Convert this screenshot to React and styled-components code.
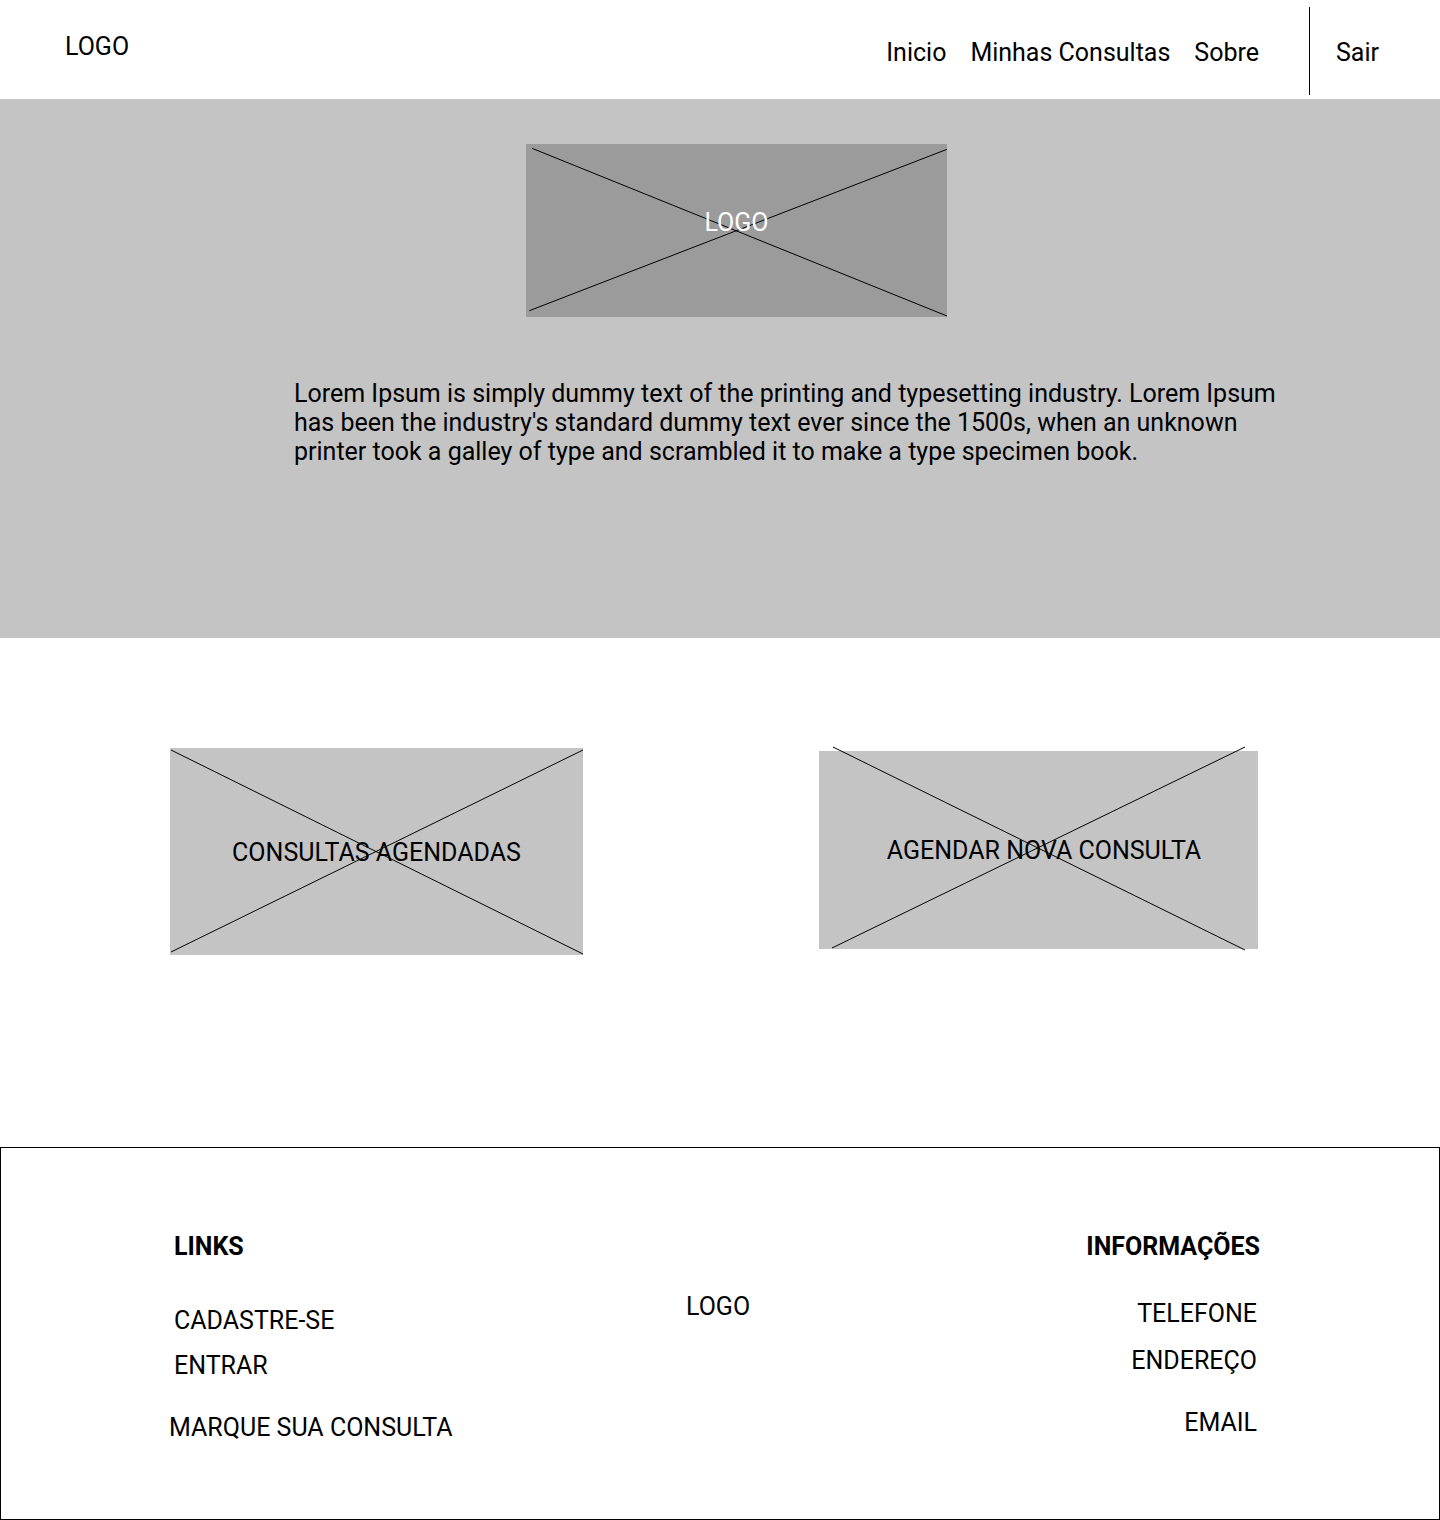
import React from "react";
import styled, { createGlobalStyle } from "styled-components";

const GlobalStyle = createGlobalStyle`
  html, body {
    margin: 0;
    padding: 0;
    background: #ffffff;
  }
  body {
    font-family: Roboto, "Liberation Sans", Arial, sans-serif;
    font-size: 25px;
    line-height: 28px;
    color: #000000;
  }
  * { box-sizing: border-box; }
`;

const Page = styled.div`
  width: 1440px;
  display: flex;
  flex-direction: column;
`;

/* ---------- Header ---------- */
const Header = styled.header`
  height: 99px;
  display: flex;
  align-items: flex-start;
  background: #ffffff;
`;

const Brand = styled.div`
  margin: 33px 0 0 65px;
`;

const Nav = styled.nav`
  margin: 39px 0 0 auto;
  display: flex;
  gap: 24px;
`;

const NavLink = styled.span`
  white-space: nowrap;
`;

const Divider = styled.div`
  width: 1px;
  height: 88px;
  margin: 7px 0 0 50px;
  background: #000000;
`;

const Logout = styled.span`
  margin: 39px 61px 0 26px;
`;

/* ---------- Hero ---------- */
const Hero = styled.section`
  height: 539px;
  background: #c4c4c4;
  padding-top: 45px;
  display: flex;
  flex-direction: column;
`;

const Placeholder = styled.div`
  position: relative;
  width: ${(p) => p.$w}px;
  height: ${(p) => p.$h}px;
  background: ${(p) => p.$bg || "#c4c4c4"};
  flex: none;
`;

const Cross = styled.svg`
  position: absolute;
  left: 0;
  top: 0;
  overflow: visible;
  pointer-events: none;
`;

const HeroLogo = styled(Placeholder)`
  margin-left: 526px;
  display: flex;
  justify-content: center;
  align-items: flex-start;
`;

const HeroLogoLabel = styled.span`
  position: relative;
  margin-top: 65px;
  color: #ffffff;
`;

const Intro = styled.p`
  margin: 62px 0 0 294px;
  width: 1000px;
  line-height: 29px;
`;

/* ---------- Cards ---------- */
const Actions = styled.section`
  height: 509px;
  display: flex;
  align-items: flex-start;
  padding: 110px 0 0 170px;
`;

const ActionCard = styled(Placeholder)`
  display: flex;
  align-items: center;
  justify-content: center;
  margin-top: ${(p) => p.$top || 0}px;
  margin-left: ${(p) => p.$left || 0}px;
  padding-left: ${(p) => p.$shift || 0}px;
  padding-top: 2px;
`;

const CardLabel = styled.span`
  position: relative;
  white-space: nowrap;
`;

/* ---------- Footer ---------- */
const Footer = styled.footer`
  height: 373px;
  border: 1px solid #000000;
  display: grid;
  grid-template-columns: 512px 1fr auto;
  align-items: start;
  padding: 85px 179px 0 173px;
`;

const Column = styled.div`
  display: flex;
  flex-direction: column;
  align-items: ${(p) => (p.$right ? "flex-end" : "flex-start")};
  text-align: ${(p) => (p.$right ? "right" : "left")};
`;

const ColumnTitle = styled.div`
  font-weight: 700;
`;

const FooterItem = styled.div`
  margin-top: ${(p) => p.$gap}px;
  margin-left: ${(p) => p.$x || 0}px;
  margin-right: ${(p) => p.$r || 0}px;
  white-space: nowrap;
`;

const FooterLogo = styled.div`
  margin-top: 60px;
`;

function XLines({ w, h, lines }) {
  return (
    <Cross width={w} height={h} viewBox={`0 0 ${w} ${h}`}>
      {lines.map((l, i) => (
        <line key={i} x1={l[0]} y1={l[1]} x2={l[2]} y2={l[3]} stroke="#000" strokeWidth="1" />
      ))}
    </Cross>
  );
}

export default function App() {
  return (
    <>
      <GlobalStyle />
      <Page>
        <Header>
          <Brand>LOGO</Brand>
          <Nav>
            <NavLink>Inicio</NavLink>
            <NavLink>Minhas Consultas</NavLink>
            <NavLink>Sobre</NavLink>
          </Nav>
          <Divider />
          <Logout>Sair</Logout>
        </Header>

        <Hero>
          <HeroLogo $w={421} $h={173} $bg="#9b9b9b">
            <XLines
              w={421}
              h={173}
              lines={[
                [6, 4.3, 421, 172],
                [3.3, 166.7, 421, 5.3],
              ]}
            />
            <HeroLogoLabel>LOGO</HeroLogoLabel>
          </HeroLogo>
          <Intro>
            Lorem Ipsum is simply dummy text of the printing and typesetting industry. Lorem Ipsum
            has been the industry's standard dummy text ever since the 1500s, when an unknown
            printer took a galley of type and scrambled it to make a type specimen book.
          </Intro>
        </Hero>

        <Actions>
          <ActionCard $w={413} $h={207}>
            <XLines
              w={413}
              h={207}
              lines={[
                [1, 2, 413, 206],
                [1, 204, 413, 2],
              ]}
            />
            <CardLabel>CONSULTAS AGENDADAS</CardLabel>
          </ActionCard>
          <ActionCard $w={439} $h={198} $top={3} $left={236} $shift={11}>
            <XLines
              w={439}
              h={198}
              lines={[
                [14, -4, 426, 199],
                [13, 197, 426, -4],
              ]}
            />
            <CardLabel>AGENDAR NOVA CONSULTA</CardLabel>
          </ActionCard>
        </Actions>

        <Footer>
          <Column>
            <ColumnTitle>LINKS</ColumnTitle>
            <FooterItem $gap={46}>CADASTRE-SE</FooterItem>
            <FooterItem $gap={17}>ENTRAR</FooterItem>
            <FooterItem $gap={34} $x={-5}>MARQUE SUA CONSULTA</FooterItem>
          </Column>
          <FooterLogo>LOGO</FooterLogo>
          <Column $right>
            <ColumnTitle>INFORMAÇÕES</ColumnTitle>
            <FooterItem $gap={39} $r={3}>TELEFONE</FooterItem>
            <FooterItem $gap={19} $r={3}>ENDEREÇO</FooterItem>
            <FooterItem $gap={34} $r={3}>EMAIL</FooterItem>
          </Column>
        </Footer>
      </Page>
    </>
  );
}
